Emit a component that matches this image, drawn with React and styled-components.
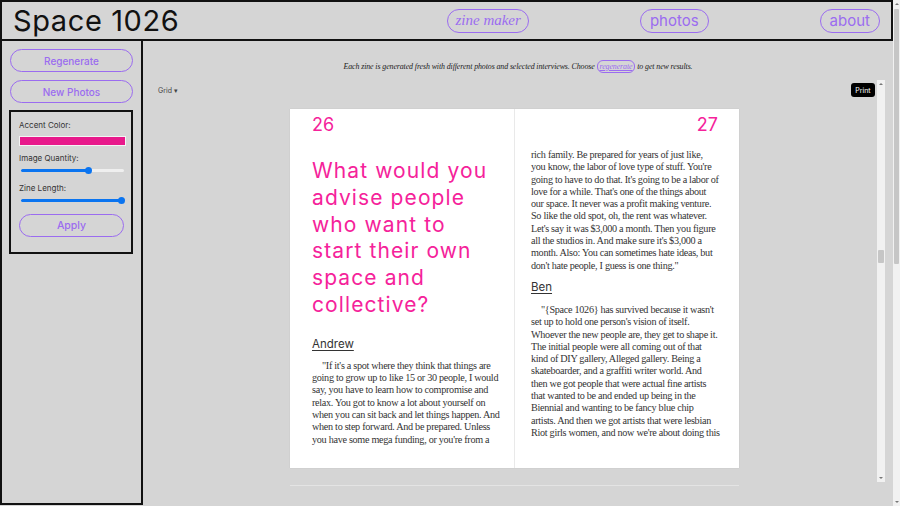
import React from 'react';
import styled, { createGlobalStyle } from 'styled-components';

const PINK = '#f5229a';
const PURPLE = '#9b6cf0';
const GROTESK = '"Inter", "Noto Sans", sans-serif';

const Global = createGlobalStyle`
  html, body { margin: 0; padding: 0; }
  body {
    background: #d5d5d5;
    overflow: hidden;
    font-family: ${GROTESK};
  }
`;

const Page = styled.div`
  display: flex;
  width: 900px;
  height: 506px;
`;

const Main = styled.div`
  width: 893px;
  display: flex;
  flex-direction: column;
`;

const Header = styled.header`
  box-sizing: border-box;
  height: 41px;
  border: 2px solid #111;
  display: flex;
  align-items: center;
  padding: 0 11px 0 11px;
`;

const Title = styled.h1`
  margin: 0;
  font-family: ${GROTESK};
  font-weight: 400;
  font-size: 29px;
  letter-spacing: 0.6px;
  color: #111;
`;

const Nav = styled.nav`
  margin-left: auto;
  display: flex;
  gap: 111px;
`;

const Pill = styled.a`
  box-sizing: border-box;
  height: 24px;
  display: flex;
  align-items: center;
  padding: 0 ${p => (p.$serif ? 7 : 9)}px;
  border: 1.5px solid ${PURPLE};
  border-radius: 12px;
  color: ${PURPLE};
  font-family: ${p => (p.$serif ? '"Liberation Serif", serif' : GROTESK)};
  font-style: ${p => (p.$serif ? 'italic' : 'normal')};
  font-size: 15px;
  text-decoration: none;
`;

const Body = styled.div`
  flex: 1;
  display: flex;
  min-height: 0;
`;

const Sidebar = styled.aside`
  box-sizing: border-box;
  width: 143px;
  border: 2px solid #111;
  border-top: none;
  margin-bottom: 1px;
  padding: 8px 8px 0 8px;
  display: flex;
  flex-direction: column;
  gap: 8px;
`;

const SideButton = styled.button`
  box-sizing: border-box;
  width: ${p => p.$width || 123}px;
  height: 23px;
  background: transparent;
  border: 1.5px solid ${PURPLE};
  border-radius: 12px;
  color: ${PURPLE};
  font-family: ${GROTESK};
  font-weight: 500;
  font-size: ${p => p.$size || 10}px;
  padding: 0;
`;

const Settings = styled.div`
  box-sizing: border-box;
  width: 124px;
  margin-left: -1px;
  margin-top: -1px;
  border: 2px solid #111;
  padding: 8px 7px 15px 8px;
  display: flex;
  flex-direction: column;
`;

const Label = styled.div`
  font-size: 8px;
  color: #333;
  line-height: 10px;
  margin-bottom: ${p => p.$mb || 6}px;
`;

const Swatch = styled.div`
  box-sizing: border-box;
  width: 107px;
  height: 10px;
  border: 1.5px solid #f4f4f4;
  background: #e8198b;
  margin-bottom: 7px;
`;

const Track = styled.div`
  position: relative;
  width: 103px;
  height: 3px;
  margin: 0 0 ${p => p.$mb}px 2px;
  border-radius: 2px;
  background: #efefef;
`;

const Fill = styled.div`
  height: 100%;
  border-radius: 2px;
  background: #0a74f0;
`;

const Thumb = styled.div`
  position: absolute;
  top: -2px;
  width: 7px;
  height: 7px;
  margin-left: -3.5px;
  border-radius: 50%;
  background: #0a74f0;
`;

const Content = styled.section`
  flex: 1;
  display: flex;
  flex-direction: column;
  min-width: 0;
`;

const Intro = styled.p`
  margin: 0;
  height: 39px;
  box-sizing: border-box;
  padding-top: 21px;
  text-align: center;
  font-family: "Liberation Serif", serif;
  font-style: italic;
  font-size: 7.9px;
  letter-spacing: -0.1px;
  color: #222;
`;

const LinkPill = styled.a`
  color: ${PURPLE};
  text-decoration: underline;
  border: 1.2px solid ${PURPLE};
  border-radius: 6px;
  padding: 1px 2px;
`;

const ScrollArea = styled.div`
  height: 402px;
  display: flex;
`;

const Viewer = styled.div`
  flex: 1;
  overflow: hidden;
  display: flex;
  flex-direction: column;
`;

const Toolbar = styled.div`
  display: flex;
  align-items: center;
  justify-content: space-between;
  height: 14px;
  padding: 3px 2px 12px 15px;
`;

const GridSelect = styled.span`
  font-size: 7px;
  color: #444;
`;

const PrintButton = styled.button`
  background: #000;
  color: #fff;
  border: none;
  border-radius: 3px;
  height: 14px;
  width: 24px;
  padding: 0;
  font-family: ${GROTESK};
  font-size: 7px;
`;

const SpreadRow = styled.div`
  display: flex;
  justify-content: center;
  padding-left: 9px;
`;

const Spread = styled.div`
  display: grid;
  grid-template-columns: 224px 225px;
  height: 359px;
  background: #fff;
  box-shadow: 0 0 1px rgba(0, 0, 0, 0.12);
`;

const Leaf = styled.div`
  box-sizing: border-box;
  padding: 7px ${p => (p.$right ? 21 : 14)}px 0 ${p => (p.$right ? 16 : 22)}px;
  border-left: ${p => (p.$right ? '1px solid #e9e9e9' : 'none')};
  display: flex;
  flex-direction: column;
`;

const Folio = styled.div`
  font-family: ${GROTESK};
  font-size: 18px;
  line-height: 18px;
  color: ${PINK};
  text-align: ${p => (p.$right ? 'right' : 'left')};
`;

const Question = styled.h2`
  margin: 24px 0 0 0;
  font-family: ${GROTESK};
  font-weight: 400;
  font-size: 21px;
  letter-spacing: 1.1px;
  line-height: 26.8px;
  color: ${PINK};
  white-space: nowrap;
`;

const Speaker = styled.h3`
  margin: ${p => p.$mt}px 0 0 0;
  font-family: ${GROTESK};
  font-weight: 400;
  font-size: 11.5px;
  line-height: 14px;
  color: #333;
  text-decoration: underline;
  text-underline-offset: 2px;
`;

const Prose = styled.p`
  margin: ${p => p.$mt}px 0 0 0;
  font-family: "Liberation Serif", serif;
  font-size: 10.2px;
  line-height: 12.3px;
  color: #333;
  white-space: nowrap;
  letter-spacing: -0.3px;
`;

const Line = styled.span`
  display: block;
  text-indent: ${p => (p.$indent ? 10 : 0)}px;
`;

const NextEdge = styled.div`
  width: 449px;
  height: 1px;
  margin: 3px 0 0 147px;
  background: #e4e4e4;
`;

const ScrollTrack = styled.div`
  box-sizing: border-box;
  width: ${p => p.$w}px;
  margin-right: ${p => p.$mr || 0}px;
  background: #f1f1f1;
  display: flex;
  flex-direction: column;
  align-items: center;
  padding-top: ${p => p.$pad}px;
`;

const Arrow = styled.div`
  width: 0;
  height: 0;
  border-left: 2px solid transparent;
  border-right: 2px solid transparent;
  ${p => (p.$down ? 'border-top' : 'border-bottom')}: 2.5px solid #777;
`;

const ScrollThumb = styled.div`
  width: ${p => p.$w}px;
  height: ${p => p.$h}px;
  margin-top: ${p => p.$top}px;
  background: #c6c6c6;
  border-radius: 1px;
`;

const Spacer = styled.div`
  flex: 1;
`;

const leftLines = [
  '"If it\'s a spot where they think that things are',
  'going to grow up to like 15 or 30 people, I would',
  'say, you have to learn how to compromise and',
  'relax. You got to know a lot about yourself on',
  'when you can sit back and let things happen. And',
  'when to step forward. And be prepared. Unless',
  "you have some mega funding, or you're from a",
];

const rightLines = [
  'rich family. Be prepared for years of just like,',
  "you know, the labor of love type of stuff. You're",
  "going to have to do that. It's going to be a labor of",
  "love for a while. That's one of the things about",
  'our space. It never was a profit making venture.',
  'So like the old spot, oh, the rent was whatever.',
  "Let's say it was $3,000 a month. Then you figure",
  "all the studios in. And make sure it's $3,000 a",
  'month. Also: You can sometimes hate ideas, but',
  'don\'t hate people, I guess is one thing."',
];

const benLines = [
  '"{Space 1026} has survived because it wasn\'t',
  "set up to hold one person's vision of itself.",
  'Whoever the new people are, they get to shape it.',
  'The initial people were all coming out of that',
  'kind of DIY gallery, Alleged gallery. Being a',
  'skateboarder, and a graffiti writer world. And',
  'then we got people that were actual fine artists',
  'that wanted to be and ended up being in the',
  'Biennial and wanting to be fancy blue chip',
  'artists. And then we got artists that were lesbian',
  "Riot girls women, and now we're about doing this",
];

const questionLines = [
  'What would you',
  'advise people',
  'who want to',
  'start their own',
  'space and',
  'collective?',
];

const Slider = ({ value, mb }) => (
  <Track $mb={mb}>
    <Fill style={{ width: `${value}%` }} />
    <Thumb style={{ left: `${value}%` }} />
  </Track>
);

const Lines = ({ lines, indentFirst }) =>
  lines.map((l, i) => (
    <Line key={i} $indent={indentFirst && i === 0}>
      {l}
    </Line>
  ));

export default function App() {
  return (
    <Page>
      <Global />
      <Main>
        <Header>
          <Title>Space 1026</Title>
          <Nav>
            <Pill $serif>zine maker</Pill>
            <Pill>photos</Pill>
            <Pill>about</Pill>
          </Nav>
        </Header>
        <Body>
          <Sidebar>
            <SideButton>Regenerate</SideButton>
            <SideButton>New Photos</SideButton>
            <Settings>
              <Label>Accent Color:</Label>
              <Swatch />
              <Label $mb={5.5}>Image Quantity:</Label>
              <Slider value={66} mb={11.5} />
              <Label $mb={5.5}>Zine Length:</Label>
              <Slider value={98} mb={12.5} />
              <SideButton $width={105} $size={10.5}>Apply</SideButton>
            </Settings>
          </Sidebar>
          <Content>
            <Intro>
              Each zine is generated fresh with different photos and selected interviews. Choose{' '}
              <LinkPill>regenerate</LinkPill> to get new results.
            </Intro>
            <ScrollArea>
              <Viewer>
                <Toolbar>
                  <GridSelect>Grid ▾</GridSelect>
                  <PrintButton>Print</PrintButton>
                </Toolbar>
                <SpreadRow>
                  <Spread>
                    <Leaf>
                      <Folio>26</Folio>
                      <Question>
                        <Lines lines={questionLines} />
                      </Question>
                      <Speaker $mt={18}>Andrew</Speaker>
                      <Prose $mt={9}>
                        <Lines lines={leftLines} indentFirst />
                      </Prose>
                    </Leaf>
                    <Leaf $right>
                      <Folio $right>27</Folio>
                      <Prose $mt={15}>
                        <Lines lines={rightLines} />
                      </Prose>
                      <Speaker $mt={8}>Ben</Speaker>
                      <Prose $mt={10}>
                        <Lines lines={benLines} indentFirst />
                      </Prose>
                    </Leaf>
                  </Spread>
                </SpreadRow>
              </Viewer>
              <ScrollTrack $w={8} $mr={8} $pad={3}>
                <Arrow />
                <ScrollThumb $w={6} $h={13} $top={165} />
                <Spacer />
                <Arrow $down />
                <div style={{ height: 3 }} />
              </ScrollTrack>
            </ScrollArea>
            <NextEdge />
          </Content>
        </Body>
      </Main>
      <ScrollTrack $w={7} $pad={3}>
        <Arrow />
        <ScrollThumb $w={5} $h={255} $top={4} />
        <Spacer />
        <Arrow $down />
        <div style={{ height: 3 }} />
      </ScrollTrack>
    </Page>
  );
}
